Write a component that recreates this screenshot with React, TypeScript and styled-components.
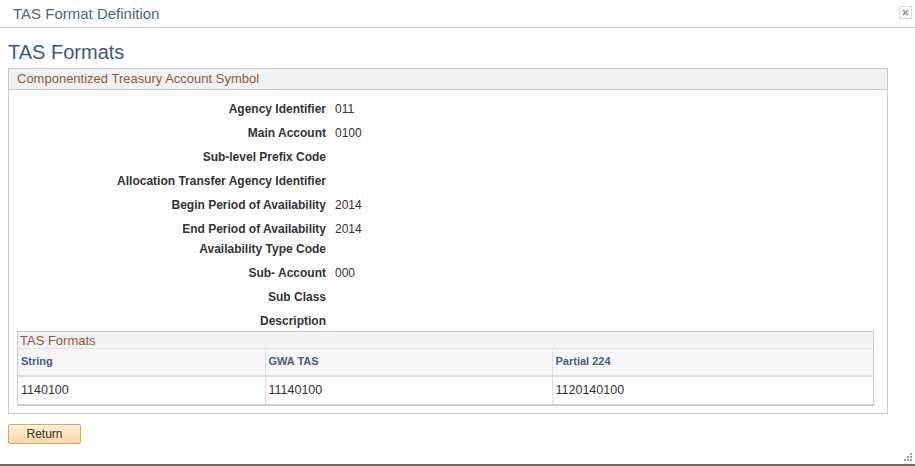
import React from 'react';
import styled, { createGlobalStyle } from 'styled-components';

type Field = {
  label: string;
  value?: string;
  rowHeight?: number;
};

const fields: Field[] = [
  { label: 'Agency Identifier', value: '011' },
  { label: 'Main Account', value: '0100' },
  { label: 'Sub-level Prefix Code' },
  { label: 'Allocation Transfer Agency Identifier' },
  { label: 'Begin Period of Availability', value: '2014' },
  { label: 'End Period of Availability', value: '2014', rowHeight: 20 },
  { label: 'Availability Type Code' },
  { label: 'Sub- Account', value: '000' },
  { label: 'Sub Class' },
  { label: 'Description', rowHeight: 18 },
];

const formats = [{ string: '1140100', gwa: '11140100', partial: '1120140100' }];

const GlobalStyle = createGlobalStyle`
  html, body {
    margin: 0;
    padding: 0;
    background: #ffffff;
    font-family: Arial, "Liberation Sans", sans-serif;
  }
`;

const Modal = styled.div`
  width: 915px;
  height: 466px;
  box-sizing: border-box;
  display: flex;
  flex-direction: column;
  border-bottom: 2px solid #6b6b6b;
  position: relative;
`;

const TitleBar = styled.div`
  height: 28px;
  box-sizing: border-box;
  border-bottom: 1px solid #cfd3d7;
  display: flex;
  align-items: center;
  justify-content: space-between;
  padding: 0 3px 0 13px;
`;

const TitleText = styled.span`
  font-size: 15px;
  color: #4c6589;
`;

const CloseButton = styled.button`
  width: 13px;
  height: 13px;
  padding: 0;
  margin-bottom: 2px;
  border: 1px solid #d3e0cf;
  background: #ffffff;
  display: flex;
  align-items: center;
  justify-content: center;
`;

const Body = styled.div`
  flex: 1;
  padding: 12px 27px 0 8px;
  display: flex;
  flex-direction: column;
`;

const PageHeading = styled.h1`
  margin: 0;
  font-size: 20px;
  font-weight: normal;
  color: #3b5a85;
  line-height: 25px;
  height: 28px;
`;

const GroupBox = styled.div`
  border: 1px solid #c9cdd1;
  display: flex;
  flex-direction: column;
  padding-bottom: 7px;
`;

const GroupHeader = styled.div`
  height: 20px;
  background: #eef2f4;
  border-bottom: 1px solid #c9cdd1;
  font-size: 13px;
  color: #9e5235;
  line-height: 19px;
  padding-left: 8px;
`;

const FieldList = styled.div`
  display: grid;
  grid-template-columns: 317px 1fr;
  column-gap: 9px;
  padding-top: 11px;
`;

const FieldLabel = styled.div<{ $height: number }>`
  font-size: 12px;
  font-weight: bold;
  color: #333333;
  text-align: right;
  height: ${p => p.$height}px;
  line-height: 16px;
`;

const FieldValue = styled.div<{ $height: number }>`
  font-size: 12px;
  color: #333333;
  height: ${p => p.$height}px;
  line-height: 16px;
`;

const GridBox = styled.div`
  margin: 0 13px 0 8px;
  border: 1px solid #c9cdd1;
  border-bottom-width: 2px;
`;

const GridTitle = styled.div`
  height: 16px;
  background: #f1f3f4;
  font-size: 13px;
  color: #9e5235;
  line-height: 17px;
  padding-left: 2px;
`;

const Table = styled.table`
  width: 100%;
  border-collapse: collapse;
  table-layout: fixed;
`;

const HeaderCell = styled.th`
  height: 27px;
  box-sizing: border-box;
  background: #f6f6f6;
  border-top: 1px solid #e2e4e6;
  border-bottom: 2px solid #dcdee0;
  border-left: 1px solid #dcdee0;
  font-size: 11px;
  font-weight: bold;
  color: #3d5e8a;
  text-align: left;
  padding: 0 0 1px 3px;

  &:first-child {
    border-left: none;
  }
`;

const DataCell = styled.td`
  height: 28px;
  box-sizing: border-box;
  border-left: 1px solid #dcdee0;
  font-size: 12.5px;
  color: #333333;
  padding: 0 0 0 3px;

  &:first-child {
    border-left: none;
  }
`;

const Footer = styled.div`
  padding-top: 10px;
`;

const ReturnButton = styled.button`
  width: 73px;
  height: 20px;
  border: 1px solid #dba760;
  border-radius: 2px;
  background: linear-gradient(to bottom, #fdf0d8, #f8d9a2);
  font-family: Arial, "Liberation Sans", sans-serif;
  font-size: 12px;
  color: #333333;
  padding: 0;
`;

const Grip = styled.svg`
  position: absolute;
  right: 2px;
  bottom: 2px;
`;

export default function App() {
  return (
    <>
      <GlobalStyle />
      <Modal>
        <TitleBar>
          <TitleText>TAS Format Definition</TitleText>
          <CloseButton aria-label="Close">
            <svg width="7" height="7" viewBox="0 0 7 7">
              <path d="M1 1 L6 6 M6 1 L1 6" stroke="#8a93a3" strokeWidth="1.6" />
            </svg>
          </CloseButton>
        </TitleBar>
        <Body>
          <PageHeading>TAS Formats</PageHeading>
          <GroupBox>
            <GroupHeader>Componentized Treasury Account Symbol</GroupHeader>
            <FieldList>
              {fields.map(f => (
                <React.Fragment key={f.label}>
                  <FieldLabel $height={f.rowHeight ?? 24}>{f.label}</FieldLabel>
                  <FieldValue $height={f.rowHeight ?? 24}>{f.value ?? ''}</FieldValue>
                </React.Fragment>
              ))}
            </FieldList>
            <GridBox>
              <GridTitle>TAS Formats</GridTitle>
              <Table>
                <colgroup>
                  <col style={{ width: 247 }} />
                  <col style={{ width: 287 }} />
                  <col />
                </colgroup>
                <thead>
                  <tr>
                    <HeaderCell>String</HeaderCell>
                    <HeaderCell>GWA TAS</HeaderCell>
                    <HeaderCell>Partial 224</HeaderCell>
                  </tr>
                </thead>
                <tbody>
                  {formats.map((row, i) => (
                    <tr key={i}>
                      <DataCell>{row.string}</DataCell>
                      <DataCell>{row.gwa}</DataCell>
                      <DataCell>{row.partial}</DataCell>
                    </tr>
                  ))}
                </tbody>
              </Table>
            </GridBox>
          </GroupBox>
          <Footer>
            <ReturnButton>Return</ReturnButton>
          </Footer>
        </Body>
        <Grip width="10" height="10" viewBox="0 0 10 10">
          <rect x="7" y="1" width="2" height="2" fill="#a0a0a0" />
          <rect x="4" y="4" width="2" height="2" fill="#a0a0a0" />
          <rect x="7" y="4" width="2" height="2" fill="#a0a0a0" />
          <rect x="1" y="7" width="2" height="2" fill="#a0a0a0" />
          <rect x="4" y="7" width="2" height="2" fill="#a0a0a0" />
          <rect x="7" y="7" width="2" height="2" fill="#a0a0a0" />
        </Grip>
      </Modal>
    </>
  );
}
